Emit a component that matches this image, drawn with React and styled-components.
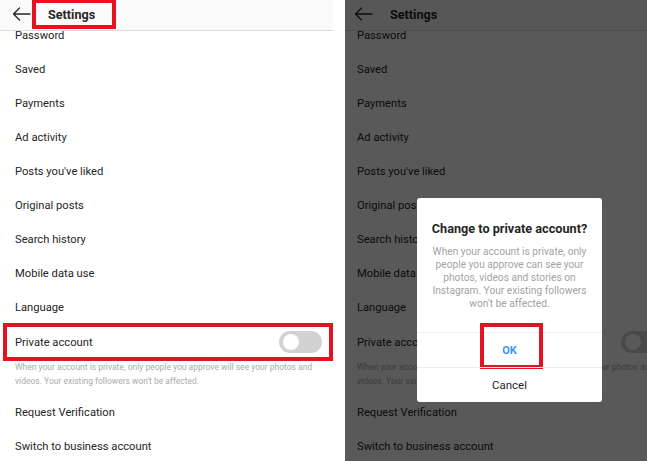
import styled, { createGlobalStyle } from "styled-components";

const GlobalStyle = createGlobalStyle`
  html, body {
    margin: 0;
    padding: 0;
    background: #fff;
  }
  body {
    font-family: Roboto, "Liberation Sans", Arial, sans-serif;
  }
`;

const Page = styled.div`
  width: 647px;
  height: 461px;
  display: flex;
  gap: 12px;
  background: #fff;
  overflow: hidden;
`;

const Frame = styled.div`
  position: relative;
  width: ${({ $width }) => $width}px;
  height: 461px;
  flex-shrink: 0;
  overflow: hidden;
`;

const Screen = styled.div`
  width: 333px;
  height: 461px;
  margin-left: ${({ $shift }) => $shift || 0}px;
  background: #fff;
  display: flex;
  flex-direction: column;
`;

const Header = styled.div`
  position: relative;
  z-index: 1;
  height: 31px;
  flex-shrink: 0;
  display: flex;
  align-items: center;
  padding-left: 12px;
  background: #fafafa;
  border-bottom: 1px solid #dcdcdc;
  box-sizing: border-box;
`;

const BackIcon = styled.svg`
  width: 19px;
  height: 14px;
  margin-top: -3px;
  flex-shrink: 0;
`;

const Title = styled.div`
  align-self: flex-start;
  box-sizing: border-box;
  width: 84px;
  height: 29px;
  margin-left: 1px;
  padding-left: 12px;
  display: flex;
  align-items: center;
  border: 4px solid ${({ $boxed }) => ($boxed ? "#e3141f" : "transparent")};
  border-top-width: 3px;
  font-size: 12.6px;
  font-weight: 700;
  color: #262626;
`;

const List = styled.div`
  margin-top: -13px;
  display: flex;
  flex-direction: column;
`;

const Row = styled.div`
  position: relative;
  height: ${({ $tall }) => ($tall ? 36 : 34)}px;
  flex-shrink: 0;
  display: flex;
  align-items: center;
  justify-content: space-between;
  padding: 0 12px 0 15px;
  font-size: 11.2px;
  color: #262626;

  ${({ $boxed }) =>
    $boxed &&
    `
    &::after {
      content: "";
      position: absolute;
      left: 3px;
      right: 0;
      top: -1px;
      bottom: -1px;
      border: 4px solid #e3141f;
    }
  `}
`;

const Toggle = styled.div`
  width: 43px;
  height: 22px;
  border-radius: 11px;
  background: #d2d2d2;
  display: flex;
  align-items: center;
  padding-left: 4px;
  box-sizing: border-box;
  margin-right: -1px;
`;

const Knob = styled.div`
  width: 16px;
  height: 16px;
  border-radius: 50%;
  background: #fff;
`;

const Note = styled.p`
  margin: 0;
  padding: 0 15px 7px;
  font-size: 8.5px;
  line-height: 14px;
  color: #ababab;
  white-space: nowrap;
`;

const Overlay = styled.div`
  position: absolute;
  inset: 0;
  background: rgba(0, 0, 0, 0.65);
  z-index: 2;
`;

const Dialog = styled.div`
  position: absolute;
  z-index: 3;
  left: 72px;
  top: 198px;
  width: 185px;
  background: #fff;
  border-radius: 3px;
  display: flex;
  flex-direction: column;
  text-align: center;
`;

const DialogTitle = styled.div`
  padding-top: 23px;
  font-size: 12.7px;
  font-weight: 700;
  line-height: 15px;
  color: #262626;
`;

const DialogBody = styled.div`
  padding: 9px 8px 0;
  height: 96px;
  box-sizing: border-box;
  font-size: 10.2px;
  line-height: 13px;
  color: #a3a3a3;
`;

const DialogButton = styled.div`
  position: relative;
  height: 34px;
  display: flex;
  align-items: center;
  justify-content: center;
  border-top: 1px solid #ececec;
  font-size: ${({ $primary }) => ($primary ? "11px" : "11.5px")};
  font-weight: ${({ $primary }) => ($primary ? 700 : 400)};
  color: ${({ $primary }) => ($primary ? "#3897f0" : "#262626")};

  ${({ $boxed }) =>
    $boxed &&
    `
    &::after {
      content: "";
      position: absolute;
      left: 63px;
      width: 63px;
      top: -10px;
      bottom: -2px;
      border: 4px solid #e3141f;
      box-sizing: border-box;
    }
  `}
`;

const items = [
  "Password",
  "Saved",
  "Payments",
  "Ad activity",
  "Posts you've liked",
  "Original posts",
  "Search history",
  "Mobile data use",
  "Language",
];

function SettingsScreen({ boxed, shift }) {
  return (
    <Screen $shift={shift}>
      <Header>
        <BackIcon viewBox="0 0 19 14" fill="none">
          <path
            d="M18 7H1.5M7.5 1L1.5 7l6 6"
            stroke="#262626"
            strokeWidth="1.3"
            strokeLinecap="round"
            strokeLinejoin="round"
          />
        </BackIcon>
        <Title $boxed={boxed}>Settings</Title>
      </Header>
      <List>
        {items.map((label) => (
          <Row key={label}>{label}</Row>
        ))}
        <Row $tall $boxed={boxed}>
          Private account
          <Toggle>
            <Knob />
          </Toggle>
        </Row>
        <Note>
          When your account is private, only people you approve will see your
          photos and
          <br />
          videos. Your existing followers won't be affected.
        </Note>
        <Row>Request Verification</Row>
        <Row>Switch to business account</Row>
      </List>
    </Screen>
  );
}

export default function App() {
  return (
    <>
      <GlobalStyle />
      <Page>
        <Frame $width={333}>
          <SettingsScreen boxed />
        </Frame>
        <Frame $width={302}>
          <SettingsScreen shift={-3} />
          <Overlay />
          <Dialog>
            <DialogTitle>Change to private account?</DialogTitle>
            <DialogBody>
              When your account is private, only
              <br />
              people you approve can see your
              <br />
              photos, videos and stories on
              <br />
              Instagram. Your existing followers
              <br />
              won't be affected.
            </DialogBody>
            <DialogButton $primary $boxed>
              OK
            </DialogButton>
            <DialogButton>Cancel</DialogButton>
          </Dialog>
        </Frame>
      </Page>
    </>
  );
}
